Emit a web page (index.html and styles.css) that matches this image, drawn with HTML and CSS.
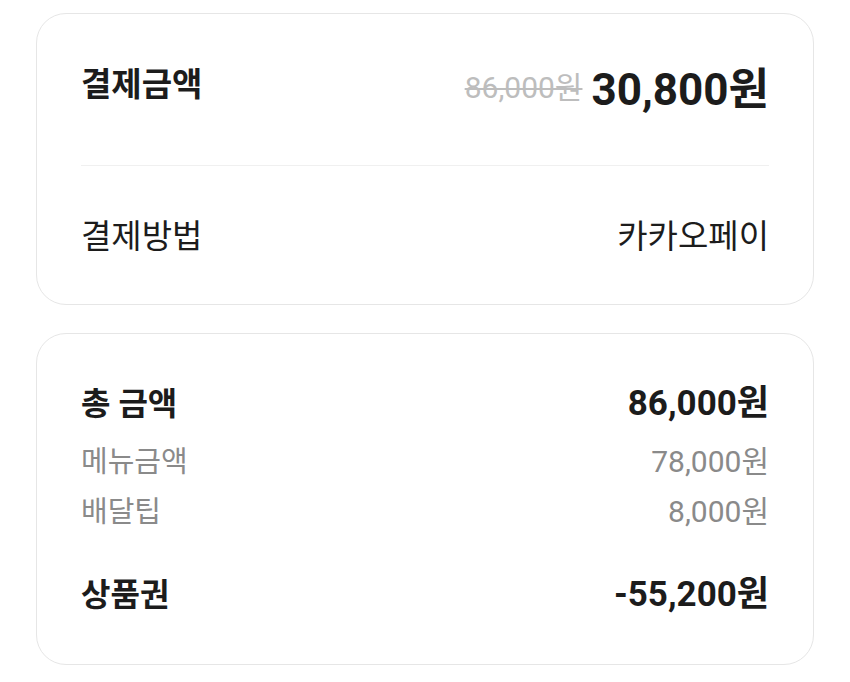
FILE: index.html
```html
<!DOCTYPE html>
<html lang="ko">
<head>
	<meta charset="UTF-8">
	<title>결제 내역</title>
	<link rel="stylesheet" href="styles.css">
</head>
<body>
	<div class="wrap">
		<div class="card payCard">
			<div class="row payRow">
				<span class="title">결제금액</span>
				<span class="price">
					<del class="origin">86,000원</del>
					<strong class="final">30,800원</strong>
				</span>
			</div>
			<div class="line"></div>
			<div class="row methodRow">
				<span>결제방법</span>
				<span>카카오페이</span>
			</div>
		</div>

		<div class="card sumCard">
			<div class="row mainRow">
				<span class="name">총 금액</span>
				<span class="num">86,000원</span>
			</div>
			<div class="row subRow menuRow">
				<span class="name">메뉴금액</span>
				<span class="num">78,000원</span>
			</div>
			<div class="row subRow tipRow">
				<span class="name">배달팁</span>
				<span class="num">8,000원</span>
			</div>
			<div class="row mainRow couponRow">
				<span class="name">상품권</span>
				<span class="num">-55,200원</span>
			</div>
		</div>
	</div>
</body>
</html>
```

FILE: styles.css
```css
*{margin:0;padding:0;box-sizing:border-box;}
body{background:#fff;font-family:"Roboto","Noto Sans CJK KR",sans-serif;color:#1c1c1c;}
.wrap{padding:13px 36px;display:flex;flex-direction:column;gap:28px;}
.card{border:1px solid #e6e6e6;border-radius:30px;background:#fff;padding:0 44px;}
.row{display:flex;justify-content:space-between;align-items:baseline;}

/* 결제금액 */
.payCard{padding-top:48px;padding-bottom:45px;}
.payRow{height:56px;align-items:flex-start;}
.title{font-size:33px;line-height:40px;font-weight:700;margin-top:3px;}
.price{display:flex;align-items:center;gap:9px;height:56px;}
.origin{font-size:30px;line-height:50px;margin-bottom:5px;color:#bdbdbd;text-decoration:line-through;text-decoration-thickness:2px;}
.final{font-size:44px;line-height:56px;font-weight:700;}
.line{height:1px;background:#f0f0f0;margin:47px 0 49px;}
.methodRow{height:44px;font-size:33px;line-height:44px;}

/* 총 금액 */
.sumCard{padding-top:48px;padding-bottom:47px;}
.mainRow{height:44px;line-height:44px;font-weight:700;}
.mainRow .name{font-size:32px;}
.mainRow .num{font-size:35px;}
.subRow{height:36px;line-height:36px;color:#8a8a8a;}
.subRow .name{font-size:29px;}
.subRow .num{font-size:30px;}
.menuRow{margin-top:18px;}
.tipRow{margin-top:14px;}
.couponRow{margin-top:43px;}
```
